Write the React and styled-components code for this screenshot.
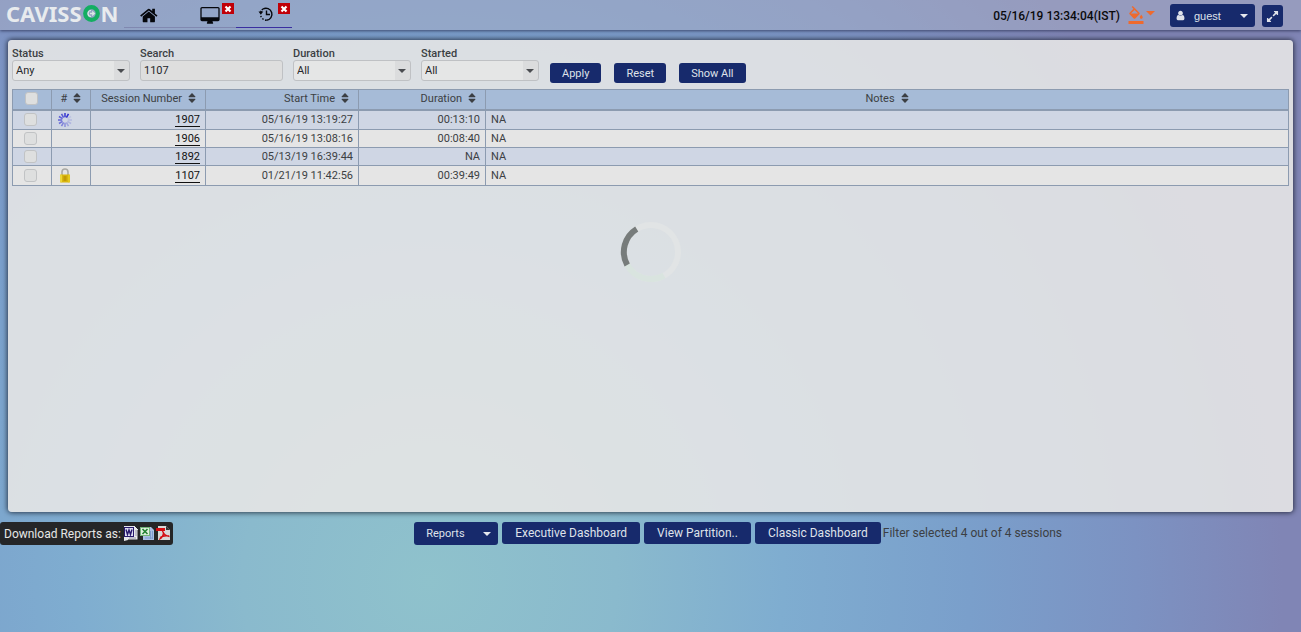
import React from "react";
import styled, { createGlobalStyle } from "styled-components";
import { MdFormatColorFill } from "react-icons/md";

const Global = createGlobalStyle`
  * { box-sizing: border-box; }
  html, body, #root { min-height: 100vh; }
  body {
    margin: 0;
    font-family: Roboto, "Liberation Sans", sans-serif;
    font-size: 11px;
    color: #3c3f43;
  }
  button, input, select { font: inherit; }
`;

const Page = styled.div`
  min-height: 100vh;
  background: radial-gradient(ellipse 80% 160% at 33% 92%, #8fc2cc 0%, #8abacd 18%, #7fadd0 34%, #7a9fcb 52%, #7c92c2 68%, #8085b5 82%);
`;

const Header = styled.header`
  display: flex;
  align-items: stretch;
  height: 30px;
  padding: 0 18px 0 6px;
  background: rgba(172, 178, 200, 0.5);
  box-shadow: 0 1px 3px rgba(30, 35, 70, 0.7);
`;

const Logo = styled.a`
  display: flex;
  align-items: center;
  gap: 1px;
  width: 118px;
  height: 26px;
  font: 700 22px/26px "Noto Sans", sans-serif;
  color: #e8ebee;
  text-decoration: none;
`;

const Tabs = styled.nav`
  display: flex;
  height: 28px;
`;

const Tab = styled.a`
  position: relative;
  display: flex;
  justify-content: center;
  align-items: center;
  width: 56px;
  padding-top: ${(p) => (p.$active ? "0" : "4px")};
  padding-right: ${(p) => (p.$home ? "6px" : "0")};
  padding-left: ${(p) => (p.$home ? "0" : "4px")};
  color: #05070c;
  border-bottom: 1px solid ${(p) => (p.$active ? "#3a2fa0" : "#8088b0")};
`;

const CloseTab = styled.button`
  position: absolute;
  top: 3px;
  right: 2px;
  display: flex;
  align-items: center;
  justify-content: center;
  width: 12px;
  height: 11px;
  padding: 0;
  border: 0;
  background: #c00008;
  color: #fff;
`;

const Spacer = styled.div`
  flex: 1;
`;

const Clock = styled.time`
  align-self: center;
  padding-top: 2px;
  font-size: 12px;
  font-weight: 500;
  color: #0a0a0c;
  white-space: nowrap;
`;

const ThemeButton = styled.button`
  display: flex;
  align-items: flex-start;
  gap: 1px;
  margin-left: 7px;
  padding: 6px 0 0;
  border: 0;
  background: none;
  color: #ee6a2e;
`;

const NavyButton = styled.button`
  display: inline-flex;
  align-items: center;
  justify-content: center;
  height: ${(p) => p.$h || 20}px;
  padding: 0 ${(p) => p.$px ?? 12}px;
  border: 0;
  border-radius: 3px;
  background: #172a6c;
  color: #dfe2ea;
  font-size: ${(p) => p.$size || 11}px;
  white-space: nowrap;
`;

const UserButton = styled(NavyButton)`
  justify-content: flex-start;
  align-self: flex-start;
  width: 85px;
  margin: 4px 7px 0 14px;
  padding: 0 7px 0 5px;
  gap: 8px;
  font-family: "Liberation Sans", sans-serif;
`;

const ExpandButton = styled(NavyButton)`
  align-self: flex-start;
  width: 21px;
  margin-top: 5px;
`;

const Caret = styled.span`
  margin-left: auto;
  border: 4px solid transparent;
  border-top-color: ${(p) => p.$color || "#e6e8ee"};
  border-bottom: 0;
`;

const Panel = styled.main`
  min-height: 472px;
  margin: 10px 8px 0;
  padding: 7px 4px;
  border-radius: 4px;
  background: rgba(229, 229, 229, 0.9);
  box-shadow: 0 0 5px 1px rgba(20, 25, 40, 0.75);
`;

const Filters = styled.form`
  display: flex;
  align-items: flex-start;
  gap: 10px;
  height: 42px;
`;

const Field = styled.label`
  position: relative;
  display: flex;
  flex-direction: column;
  width: ${(p) => p.$w}px;
  font-weight: 500;
  line-height: 13px;
`;

const control = `
  width: 100%;
  height: 21px;
  padding: 0 3px;
  border: 1px solid #bfc1c4;
  border-radius: 3px;
  color: #26282b;
  outline: 0;
  font-weight: 400;
`;

const Select = styled.select`
  ${control}
  appearance: none;
  background: linear-gradient(to right, #e5e6e6 calc(100% - 15px), #dbdcdd calc(100% - 15px));
`;

const SelectCaret = styled(Caret)`
  position: absolute;
  right: 5px;
  bottom: 8px;
  pointer-events: none;
`;

const TextInput = styled.input`
  ${control}
  background: #dedede;
`;

const Actions = styled.div`
  display: flex;
  gap: 13px;
  padding: 16px 0 0 1px;
`;

const Table = styled.table`
  width: 100%;
  table-layout: fixed;
  border-collapse: collapse;
`;

const Th = styled.th`
  height: 20px;
  padding: 0 ${(p) => (p.$align === "right" ? 9 : 6)}px 2px;
  border: 1px solid #8c9bb0;
  border-bottom-width: 2px;
  background: #a6bbd7;
  font-weight: 400;
  line-height: 13px;
  text-align: ${(p) => p.$align || "center"};
  white-space: nowrap;

  svg { margin-left: 6px; vertical-align: -1px; }
`;

const Tr = styled.tr`
  height: ${(p) => (p.$tall ? 20 : 18)}px;
  background: ${(p) => (p.$odd ? "#cfd6e4" : "#e5e5e5")};
`;

const Td = styled.td`
  padding: 0 5px;
  border: 1px solid #8c9bb0;
  line-height: 13px;
  text-align: ${(p) => p.$align || "left"};
  white-space: nowrap;

  svg { display: block; }
`;

const Check = styled.input`
  appearance: none;
  display: block;
  width: 13px;
  height: 13px;
  margin: 0 6px;
  border: 1px solid #c1c3c5;
  border-radius: 3px;
  background: #dedfdf;
`;

const SessionLink = styled.a`
  display: inline-block;
  line-height: 13px;
  border-bottom: 1px solid #111;
  color: #111;
  text-decoration: none;
`;

const Loader = styled.div`
  display: flex;
  justify-content: center;
  padding: 35px 0 0;
`;

const Footer = styled.footer`
  display: grid;
  grid-template-columns: 1fr auto 1fr;
  align-items: start;
  padding: 10px 6px 0 0;
  font-size: 12px;
`;

const Downloads = styled.div`
  justify-self: start;
  display: flex;
  align-items: center;
  gap: 2px;
  height: 23px;
  padding: 0 3px 0 4px;
  border-radius: 3px;
  background: #252628;
  color: #e6e6e6;

  span { margin-right: 1px; }
`;

const IconLink = styled.a`
  display: block;
  width: 14px;
  height: 15px;
`;

const FooterActions = styled.div`
  display: flex;
  gap: 4px;
`;

const ReportsButton = styled(NavyButton)`
  width: 84px;
  padding: 0 7px 0 12px;
`;

const Summary = styled.p`
  margin: 0;
  padding-left: 2px;
  line-height: 22px;
`;

const Glyph = ({ d, w = 14, h = 14, box = "0 0 1792 1792" }) => (
  <svg width={w} height={h} viewBox={box} fill="currentColor" aria-hidden="true">
    <path d={d} />
  </svg>
);

const home = "M1408 992v480q0 26-19 45t-45 19h-384v-384h-256v384h-384q-26 0-45-19t-19-45v-480q0-1 .5-3t.5-3l575-474 575 474q1 2 1 6zm223-69l-62 74q-8 9-21 11h-3q-13 0-21-7l-692-577-692 577q-12 8-24 7-13-2-21-11l-62-74q-8-10-7-23.5t11-21.5l719-599q32-26 76-26t76 26l244 204v-195q0-14 9-23t23-9h192q14 0 23 9t9 23v408l219 182q10 8 11 21.5t-7 23.5z";
const desktop = "M1792 992v-832q0-13-9.500-22.500t-22.500-9.500h-1600q-13 0-22.500 9.500t-9.500 22.500v832q0 13 9.500 22.500t22.500 9.500h1600q13 0 22.500-9.500t9.500-22.500zm128-832v1088q0 66-47 113t-113 47h-544q0 37 16 77.500t32 71 16 43.500q0 26-19 45t-45 19h-512q-26 0-45-19t-19-45q0-14 16-44t32-70 16-78h-544q-66 0-113-47t-47-113v-1088q0-66 47-113t113-47h1600q66 0 113 47t47 113z";
const user = "M1536 1399q0 109-62.5 187t-150.500 78h-854q-88 0-150.500-78t-62.500-187q0-85 8.500-160.500t31.500-152 58.500-131 94-89 134.500-34.500q131 128 313 128t313-128q76 0 134.500 34.500t94 89 58.500 131 31.500 152 8.500 160.500zm-256-887q0 159-112.500 271.500t-271.500 112.500-271.500-112.500-112.500-271.500 112.500-271.500 271.500-112.500 271.500 112.500 112.500 271.500z";
const sort = "M1408 1088q0 26-19 45l-448 448q-19 19-45 19t-45-19l-448-448q-19-19-19-45t19-45 45-19h896q26 0 45 19t19 45zm0-384q0 26-19 45t-45 19h-896q-26 0-45-19t-19-45 19-45l448-448q19-19 45-19t45 19l448 448q19 19 19 45z";
const expand = "M883 1056q0 13-10 23l-332 332 144 144q19 19 19 45t-19 45-45 19h-448q-26 0-45-19t-19-45v-448q0-26 19-45t45-19 45 19l144 144 332-332q10-10 23-10t23 10l114 114q10 10 10 23zm781-864v448q0 26-19 45t-45 19-45-19l-144-144-332 332q-10 10-23 10t-23-10l-114-114q-10-10-10-23t10-23l332-332-144-144q-19-19-19-45t19-45 45-19h448q26 0 45 19t19 45z";

const SortIcon = () => <Glyph d={sort} w={8} h={10} box="384 160 1024 1472" />;

const Ring = () => (
  <svg width="17" height="17" viewBox="0 0 17 17" aria-hidden="true">
    <circle cx="8.500" cy="8.500" r="6.300" fill="none" stroke="#14ae62" strokeWidth="4.200" />
    <path d="M8 5.500A3 3 0 0 0 8 11.500" fill="none" stroke="#d9e9e4" strokeWidth="1.200" />
    <path d="M7 7.700h2.200V5.800L12.300 8.500 9.200 11.200V9.300H7z" fill="#d9e9e4" />
  </svg>
);

const HistoryIcon = () => (
  <svg width="16" height="16" viewBox="0 0 16 16" fill="none" stroke="currentColor" aria-hidden="true">
    <path d="M5 3A6 6 0 1 1 8.500 14.200" strokeWidth="1.400" />
    <path d="M8.500 14.200A6 6 0 0 1 2.600 9" strokeWidth="1.500" strokeDasharray="1.500 1.500" />
    <path d="M5 3A6 6 0 0 0 2.800 6" strokeWidth="1.500" strokeDasharray="1.500 1" />
    <path d="M0.500 5.500h4.800L2.800 8.700z" fill="currentColor" stroke="none" />
    <path d="M8.500 4.500v4h3.500" strokeWidth="1.400" />
  </svg>
);

const Cross = () => (
  <svg width="8" height="8" viewBox="0 0 8 8" stroke="currentColor" strokeWidth="2.200" aria-hidden="true">
    <path d="M1.500 1.500l5 5M6.500 1.500l-5 5" />
  </svg>
);

const BusyIcon = () => (
  <svg width="16" height="14" viewBox="-1 0 16 14" strokeWidth="1.600" aria-hidden="true">
    {[1, 0.1, 0.15, 0.2, 0.3, 0.4, 0.5, 0.6, 0.65, 0.7, 0.75, 0.9].map((o, i) => (
      <path key={i} d="M7 0v4.200" stroke="#3030d0" opacity={o} transform={`rotate(${i * 30 + 30} 7 7)`} />
    ))}
  </svg>
);

const LockIcon = () => (
  <svg width="16" height="15" viewBox="-2 0 16 15" aria-hidden="true">
    <path d="M3 7V4a3 3 0 0 1 6 0v3" fill="none" stroke="#a9a9a4" strokeWidth="1.600" />
    <rect x="1" y="6.500" width="10" height="8" rx="1" fill="#d9b60c" />
    <rect x="1" y="6.500" width="2" height="8" rx="1" fill="#ecd638" />
    <rect x="4.500" y="8" width="3" height="5" fill="#c29a08" />
    <rect x="9" y="6.500" width="2" height="8" rx="1" fill="#e3c81f" />
  </svg>
);

const WordIcon = () => (
  <svg width="15" height="15" viewBox="0 0 15 15" aria-hidden="true">
    <path d="M0 0h11l3 3v11H4l-4 1z" fill="#e8e8ec" />
    <path d="M11 0l3 3M14 4v10H4" fill="none" stroke="#222" />
    <rect x="0.500" y="1.500" width="9" height="9" fill="#dcdcf0" stroke="#28186c" />
    <path d="M2 3.500l1.500 5L5 4l1.500 4.500L8 3.500" fill="none" stroke="#28186c" strokeWidth="1.400" />
    <path d="M11 5h2M11 7h2M11 9h2M5 12h7" stroke="#9a9aa8" />
  </svg>
);

const ExcelIcon = () => (
  <svg width="14" height="15" viewBox="0 0 14 15" aria-hidden="true">
    <path d="M3 1h8l3 3v10H3z" fill="#a9bfe4" />
    <path d="M5 12h7M10.500 5v8M12.500 5v8" stroke="#7f9bd0" />
    <rect x="0.500" y="1.500" width="9" height="8" fill="#dff0df" stroke="#74b47a" />
    <path d="M2.500 3l5 5M7.500 3l-5 5" stroke="#238232" strokeWidth="1.600" />
  </svg>
);

const PdfIcon = () => (
  <svg width="14" height="15" viewBox="0 0 14 15" aria-hidden="true">
    <path d="M2 0h8l4 4v10H2z" fill="#d8d8d8" />
    <path d="M10 0v4h4z" fill="#333" />
    <path d="M0 2h9v3H0z" fill="#d40d12" />
    <path d="M6.500 5c1 3 3 5 7 5.500M7.500 6c0 3-1.500 6-4.500 7.500M4 11.500c3-2 6-2 9-1.500" fill="none" stroke="#d40d12" strokeWidth="1.300" />
  </svg>
);

const LoaderIcon = () => (
  <svg width="62" height="62" viewBox="0 0 62 62" fill="none" strokeWidth="6" role="img" aria-label="Loading">
    <circle cx="31" cy="31" r="27" stroke="#e1e4e5" />
    <path d="M44 54.700A27 27 0 0 1 7 43.300" stroke="#d9e4df" />
    <path d="M7.200 44A27 27 0 0 1 16.700 8" stroke="#777c7b" />
  </svg>
);

const SelectField = ({ label, value, options }) => (
  <Field $w={118}>
    {label}
    <Select defaultValue={value}>
      {options.map((o) => <option key={o}>{o}</option>)}
    </Select>
    <SelectCaret $color="#4a4c50" />
  </Field>
);

const sessions = [
  { id: "1907", icon: <BusyIcon />, start: "05/16/19 13:19:27", duration: "00:13:10", notes: "NA" },
  { id: "1906", start: "05/16/19 13:08:16", duration: "00:08:40", notes: "NA" },
  { id: "1892", start: "05/13/19 16:39:44", duration: "NA", notes: "NA" },
  { id: "1107", icon: <LockIcon />, start: "01/21/19 11:42:56", duration: "00:39:49", notes: "NA" },
];

export default function App() {
  return (
    <Page>
      <Global />
      <Header>
        <Logo href="#" aria-label="Cavisson"><span>CAVISS</span><Ring /><span>N</span></Logo>
        <Tabs>
          <Tab href="#home" $home aria-label="Home"><Glyph d={home} w={19} h={19} /></Tab>
          <Tab as="div">
            <Glyph d={desktop} w={20} h={18} box="0 0 1920 1792" />
            <CloseTab aria-label="Close monitor tab"><Cross /></CloseTab>
          </Tab>
          <Tab as="div" $active>
            <HistoryIcon />
            <CloseTab aria-label="Close sessions tab"><Cross /></CloseTab>
          </Tab>
        </Tabs>
        <Spacer />
        <Clock>05/16/19 13:34:04(IST)</Clock>
        <ThemeButton aria-label="Theme colour">
          <MdFormatColorFill size={18} />
          <svg width="10" height="10" viewBox="0 0 10 10" fill="currentColor" aria-hidden="true"><path d="M0 5h9L4.500 9.500z" /></svg>
        </ThemeButton>
        <UserButton $h={23}><Glyph d={user} w={11} h={11} />guest<Caret /></UserButton>
        <ExpandButton $h={22} $px={0} aria-label="Full screen"><Glyph d={expand} w={13} h={13} /></ExpandButton>
      </Header>

      <Panel>
        <Filters onSubmit={(e) => e.preventDefault()}>
          <SelectField label="Status" value="Any" options={["Any", "Running", "Locked"]} />
          <Field $w={143}>Search<TextInput defaultValue="1107" /></Field>
          <SelectField label="Duration" value="All" options={["All"]} />
          <SelectField label="Started" value="All" options={["All"]} />
          <Actions>
            <NavyButton>Apply</NavyButton>
            <NavyButton type="reset">Reset</NavyButton>
            <NavyButton type="button">Show All</NavyButton>
          </Actions>
        </Filters>

        <Table>
          <colgroup>
            <col width="39" /><col width="39" /><col width="115" /><col width="153" /><col width="127" /><col />
          </colgroup>
          <thead>
            <tr>
              <Th><Check type="checkbox" aria-label="Select all sessions" /></Th>
              <Th>#<SortIcon /></Th>
              <Th $align="right">Session Number<SortIcon /></Th>
              <Th $align="right">Start Time<SortIcon /></Th>
              <Th $align="right">Duration<SortIcon /></Th>
              <Th>Notes<SortIcon /></Th>
            </tr>
          </thead>
          <tbody>
            {sessions.map((s, i) => (
              <Tr key={s.id} $odd={i % 2 === 0} $tall={Boolean(s.icon)}>
                <Td><Check type="checkbox" aria-label={`Select session ${s.id}`} /></Td>
                <Td>{s.icon}</Td>
                <Td $align="right"><SessionLink href={`#${s.id}`}>{s.id}</SessionLink></Td>
                <Td $align="right">{s.start}</Td>
                <Td $align="right">{s.duration}</Td>
                <Td>{s.notes}</Td>
              </Tr>
            ))}
          </tbody>
        </Table>
        <Loader><LoaderIcon /></Loader>
      </Panel>

      <Footer>
        <Downloads>
          <span>Download Reports as:</span>
          <IconLink href="#word" aria-label="Word"><WordIcon /></IconLink>
          <IconLink href="#excel" aria-label="Excel"><ExcelIcon /></IconLink>
          <IconLink href="#pdf" aria-label="PDF"><PdfIcon /></IconLink>
        </Downloads>
        <FooterActions>
          <ReportsButton $h={23}>Reports<Caret /></ReportsButton>
          <NavyButton $h={22} $px={13} $size={12}>Executive Dashboard</NavyButton>
          <NavyButton $h={22} $px={13} $size={12}>View Partition..</NavyButton>
          <NavyButton $h={22} $px={13} $size={12}>Classic Dashboard</NavyButton>
        </FooterActions>
        <Summary>Filter selected 4 out of 4 sessions</Summary>
      </Footer>
    </Page>
  );
}
